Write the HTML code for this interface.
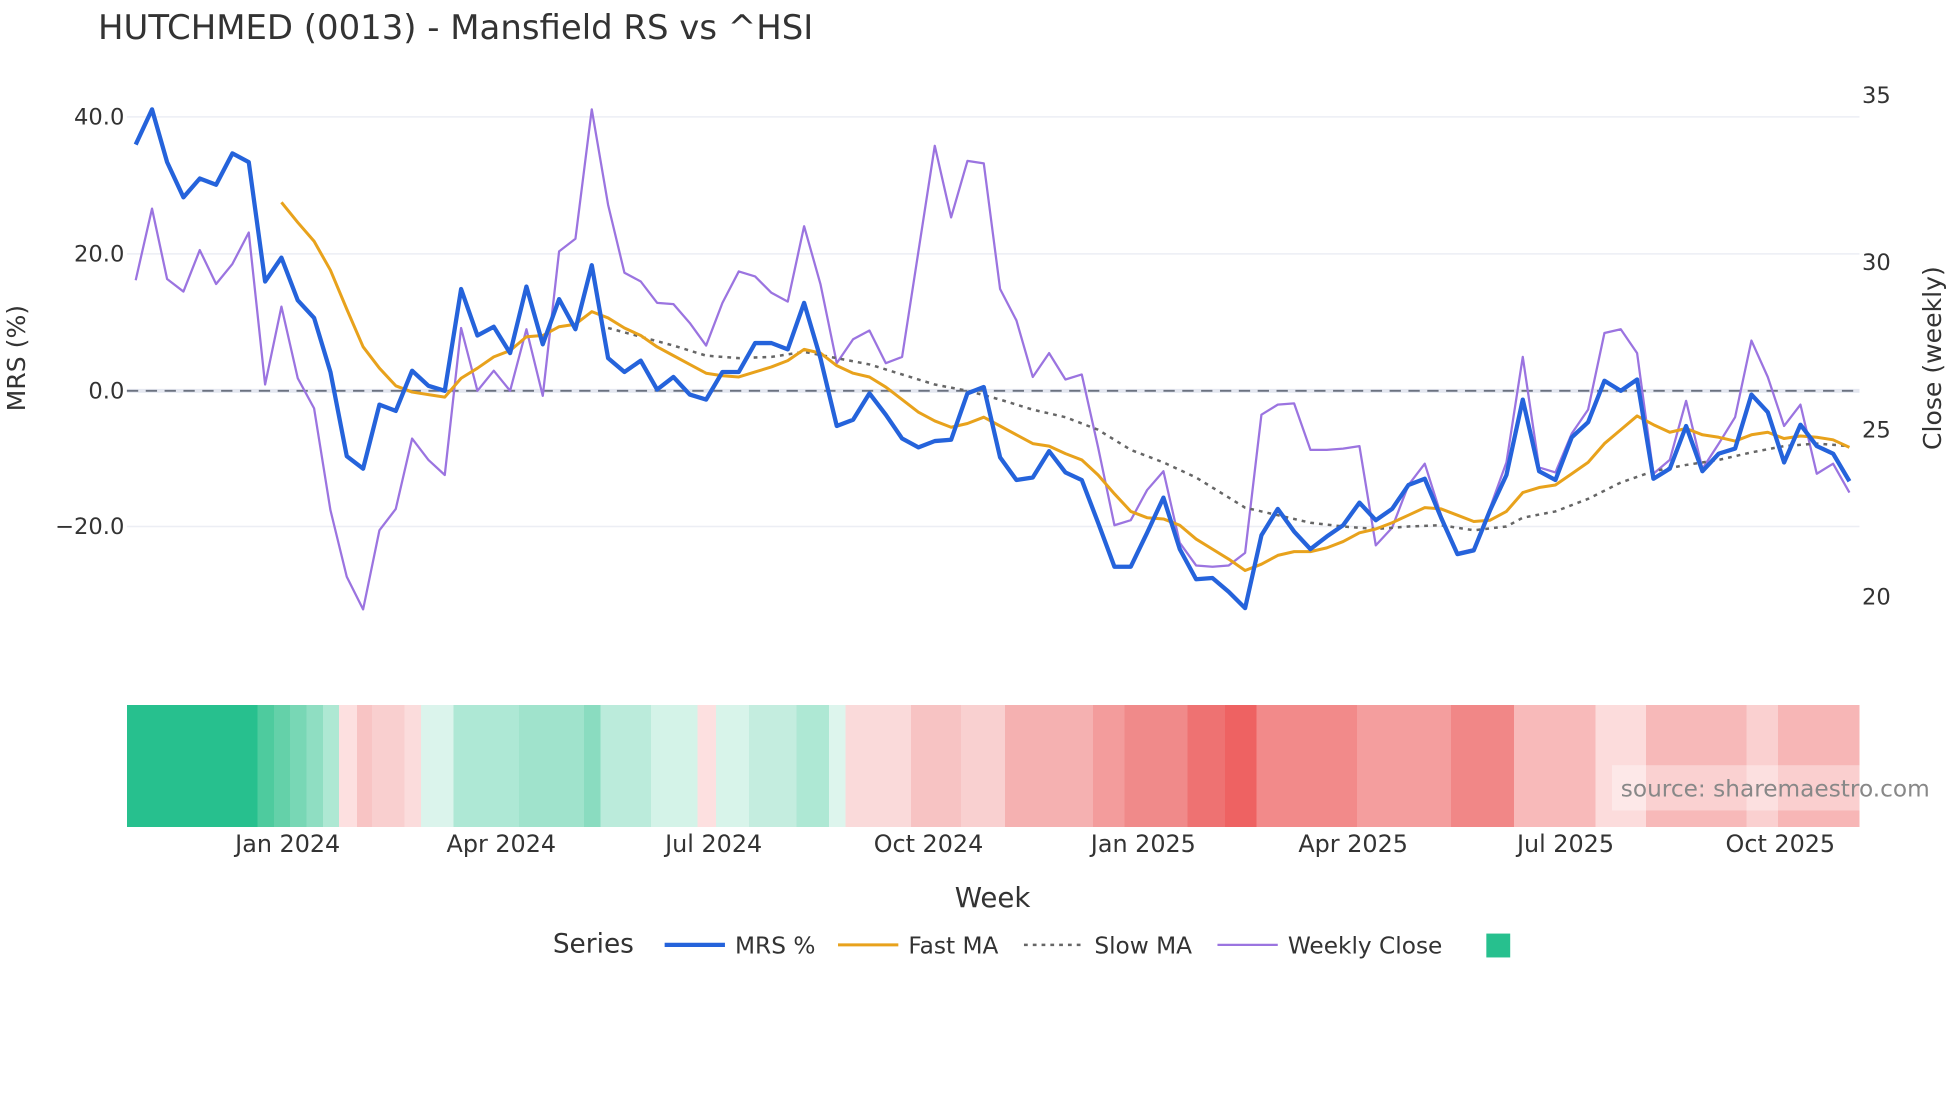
<!DOCTYPE html>
<html><head><meta charset="utf-8"><style>html,body{margin:0;padding:0;background:#fff;}svg{display:block;}</style></head>
<body>
<svg width="1960" height="1102" viewBox="0 0 1560 877" xmlns="http://www.w3.org/2000/svg" font-family="'DejaVu Sans','Liberation Sans',sans-serif">
<rect width="1560" height="877" fill="#fff"/>
<text x="78" y="31" font-size="27" fill="#333">HUTCHMED (0013) - Mansfield RS vs ^HSI</text>
<g stroke="#eceef4" stroke-width="1.2">
<line x1="101" y1="93" x2="1480" y2="93"/><line x1="101" y1="202" x2="1480" y2="202"/><line x1="101" y1="419" x2="1480" y2="419"/>
</g>
<line x1="101" y1="311" x2="1480" y2="311" stroke="#e4e7f0" stroke-width="3"/>
<line x1="101" y1="311" x2="1480" y2="311" stroke="#6b7280" stroke-width="1.5" stroke-dasharray="9,6"/>
<g font-size="18" fill="#333" text-anchor="end">
<text x="99" y="99">40.0</text><text x="99" y="208">20.0</text><text x="99" y="317">0.0</text><text x="99" y="425">−20.0</text>
</g>
<g font-size="18" fill="#333">
<text x="1482" y="82">35</text><text x="1482" y="215">30</text><text x="1482" y="348">25</text><text x="1482" y="481">20</text>
</g>
<text transform="translate(20,285) rotate(-90)" font-size="20" fill="#333" text-anchor="middle">MRS (%)</text>
<text transform="translate(1545,285) rotate(-90)" font-size="20" fill="#333" text-anchor="middle">Close (weekly)</text>
<polyline fill="none" stroke="#9b74e0" stroke-width="1.8" stroke-linejoin="round" points="108,223 121,166 133,222 146,232 159,199 172,226 185,210 198,185 211,306 224,244 237,301 250,325 263,406 276,459 289,485 302,422 315,405 328,349 341,366 354,378 367,261 380,311 393,295 406,311 419,262 432,315 445,200 458,190 471,87 484,163 497,217 510,224 523,241 536,242 549,257 562,275 575,241 588,216 601,220 614,233 627,240 640,180 653,226 666,289 679,270 692,263 705,289 718,284 731,200 744,116 757,173 770,128 783,130 796,230 809,255 822,300 835,281 848,302 861,298 874,356 887,418 900,414 913,390 926,375 939,432 952,450 965,451 978,450 991,440 1004,330 1017,322 1030,321 1043,358 1056,358 1069,357 1082,355 1095,434 1108,420 1121,386 1134,369 1147,410 1160,440 1173,437 1186,404 1199,368 1212,284 1225,372 1238,376 1251,345 1264,326 1277,265 1290,262 1303,281 1316,377 1329,366 1342,319 1355,373 1368,353 1381,332 1394,271 1407,300 1420,339 1433,322 1446,377 1459,369 1472,392"/>
<polyline fill="none" stroke="#666" stroke-width="2" stroke-dasharray="3,4" points="484,261 510,268 536,275 562,283 588,285 614,284 640,280 666,285 692,290 718,298 744,306 770,311 796,318 822,326 848,332 874,342 900,358 926,368 952,380 978,396 991,404 1017,410 1043,416 1069,419 1095,421 1121,419 1147,418 1173,422 1199,419 1212,412 1238,407 1264,397 1290,384 1316,375 1342,370 1368,366 1394,360 1420,355 1446,353 1472,355"/>
<polyline fill="none" stroke="#e8a21c" stroke-width="2.4" stroke-linejoin="round" points="224,161 237,177 250,192 263,215 276,246 289,276 302,293 315,307 328,312 341,314 354,316 367,301 380,293 393,284 406,279 419,268 432,267 445,260 458,258 471,248 484,253 497,261 510,267 523,276 536,283 549,290 562,297 575,299 588,300 601,296 614,292 627,287 640,278 653,281 666,291 679,297 692,300 705,308 718,318 731,328 744,335 757,340 770,337 783,332 796,339 809,346 822,353 835,355 848,361 861,366 874,378 887,393 900,407 913,412 926,413 939,418 952,429 965,437 978,445 991,454 1004,449 1017,442 1030,439 1043,439 1056,436 1069,431 1082,424 1095,421 1108,416 1121,410 1134,404 1147,405 1160,410 1173,415 1186,414 1199,407 1212,392 1225,388 1238,386 1251,377 1264,368 1277,353 1290,342 1303,331 1316,338 1329,344 1342,341 1355,346 1368,348 1381,351 1394,346 1407,344 1420,349 1433,347 1446,348 1459,350 1472,356"/>
<polyline fill="none" stroke="#2563db" stroke-width="3.4" stroke-linejoin="round" points="108,115 121,87 133,129 146,157 159,142 172,147 185,122 198,129 211,224 224,205 237,239 250,253 263,296 276,363 289,373 302,322 315,327 328,295 341,307 354,311 367,230 380,267 393,260 406,281 419,228 432,274 445,238 458,262 471,211 484,285 497,296 510,287 523,310 536,300 549,314 562,318 575,296 588,296 601,273 614,273 627,278 640,241 653,285 666,339 679,334 692,313 705,330 718,349 731,356 744,351 757,350 770,313 783,308 796,364 809,382 822,380 835,359 848,376 861,382 874,416 887,451 900,451 913,424 926,396 939,437 952,461 965,460 978,471 991,484 1004,426 1017,405 1030,423 1043,437 1056,427 1069,418 1082,400 1095,414 1108,405 1121,386 1134,381 1147,412 1160,441 1173,438 1186,406 1199,378 1212,318 1225,375 1238,382 1251,348 1264,336 1277,303 1290,311 1303,302 1316,381 1329,373 1342,339 1355,375 1368,361 1381,357 1394,314 1407,328 1420,368 1433,338 1446,355 1459,361 1472,383"/>
<g shape-rendering="crispEdges">
<rect x="101" y="561" width="104" height="97" fill="#27c08e"/>
<rect x="205" y="561" width="13" height="97" fill="#4ecb9e"/>
<rect x="218" y="561" width="13" height="97" fill="#64d1a9"/>
<rect x="231" y="561" width="13" height="97" fill="#78d7b5"/>
<rect x="244" y="561" width="13" height="97" fill="#8fdec2"/>
<rect x="257" y="561" width="13" height="97" fill="#aee8d3"/>
<rect x="270" y="561" width="14" height="97" fill="#fde0e0"/>
<rect x="284" y="561" width="12" height="97" fill="#f8c4c4"/>
<rect x="296" y="561" width="26" height="97" fill="#f9cfcf"/>
<rect x="322" y="561" width="13" height="97" fill="#fbdcdc"/>
<rect x="335" y="561" width="26" height="97" fill="#dbf4ec"/>
<rect x="361" y="561" width="52" height="97" fill="#aee8d5"/>
<rect x="413" y="561" width="52" height="97" fill="#a0e3cc"/>
<rect x="465" y="561" width="13" height="97" fill="#8adcc0"/>
<rect x="478" y="561" width="40" height="97" fill="#bbebdb"/>
<rect x="518" y="561" width="37" height="97" fill="#d4f3e8"/>
<rect x="555" y="561" width="15" height="97" fill="#fde0e0"/>
<rect x="570" y="561" width="26" height="97" fill="#d8f4ea"/>
<rect x="596" y="561" width="38" height="97" fill="#c4eddf"/>
<rect x="634" y="561" width="26" height="97" fill="#aee8d4"/>
<rect x="660" y="561" width="13" height="97" fill="#ddf5ed"/>
<rect x="673" y="561" width="52" height="97" fill="#fadada"/>
<rect x="725" y="561" width="40" height="97" fill="#f7c3c3"/>
<rect x="765" y="561" width="35" height="97" fill="#f9d0d0"/>
<rect x="800" y="561" width="70" height="97" fill="#f5b1b1"/>
<rect x="870" y="561" width="25" height="97" fill="#f39c9c"/>
<rect x="895" y="561" width="50" height="97" fill="#f08a8a"/>
<rect x="945" y="561" width="30" height="97" fill="#ee7272"/>
<rect x="975" y="561" width="25" height="97" fill="#ee6262"/>
<rect x="1000" y="561" width="80" height="97" fill="#f28a8a"/>
<rect x="1080" y="561" width="75" height="97" fill="#f49e9e"/>
<rect x="1155" y="561" width="50" height="97" fill="#f18787"/>
<rect x="1205" y="561" width="65" height="97" fill="#f8baba"/>
<rect x="1270" y="561" width="40" height="97" fill="#fcdcdc"/>
<rect x="1310" y="561" width="80" height="97" fill="#f7b9b9"/>
<rect x="1390" y="561" width="25" height="97" fill="#fad0d0"/>
<rect x="1415" y="561" width="65" height="97" fill="#f7b6b6"/>
</g>
<rect x="1283" y="609" width="262" height="36" fill="#fff" fill-opacity="0.35"/>
<text x="1290" y="634" font-size="18.5" fill="#888">source: sharemaestro.com</text>
<g font-size="19" fill="#333" text-anchor="middle">
<text x="229" y="678">Jan 2024</text><text x="399" y="678">Apr 2024</text><text x="568" y="678">Jul 2024</text><text x="739" y="678">Oct 2024</text>
<text x="910" y="678">Jan 2025</text><text x="1077" y="678">Apr 2025</text><text x="1246" y="678">Jul 2025</text><text x="1417" y="678">Oct 2025</text>
<text x="790" y="722" font-size="22">Week</text>
</g>
<text x="440" y="758" font-size="21" fill="#333">Series</text>
<line x1="529" y1="752" x2="577" y2="752" stroke="#2563db" stroke-width="3.4"/>
<text x="585" y="759" font-size="18.5" fill="#333">MRS %</text>
<line x1="667" y1="752" x2="715" y2="752" stroke="#e8a21c" stroke-width="2.4"/>
<text x="723" y="759" font-size="18.5" fill="#333">Fast MA</text>
<line x1="815" y1="752" x2="863" y2="752" stroke="#666" stroke-width="2" stroke-dasharray="3,4"/>
<text x="871" y="759" font-size="18.5" fill="#333">Slow MA</text>
<line x1="969" y1="752" x2="1017" y2="752" stroke="#9b74e0" stroke-width="1.8"/>
<text x="1025" y="759" font-size="18.5" fill="#333">Weekly Close</text>
<rect x="1183" y="743" width="19" height="19" fill="#27c08e"/>
</svg>
</body></html>
